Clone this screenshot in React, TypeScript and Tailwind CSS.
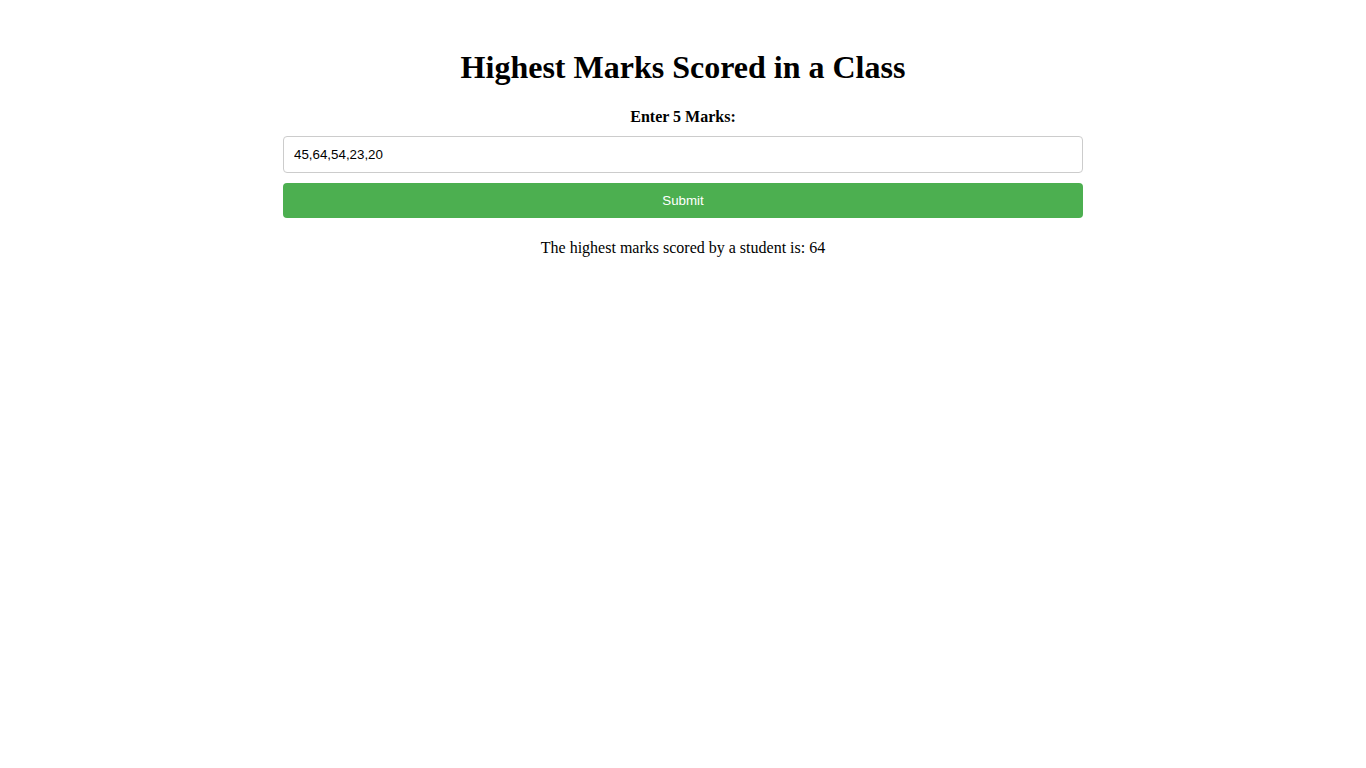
import { useState } from 'react'

export default function App() {
  const [marks, setMarks] = useState('45,64,54,23,20')
  const [result, setResult] = useState<number | null>(64)

  const handleSubmit = () => {
    const nums = marks
      .split(',')
      .map((m) => Number(m.trim()))
      .filter((n) => !Number.isNaN(n))
    setResult(nums.length ? Math.max(...nums) : null)
  }

  return (
    <div className="min-h-screen bg-white text-black font-['Liberation_Serif',serif]">
      <div className="mx-auto w-[800px] pt-[49px] text-center">
        <h1 className="text-[32px] font-bold leading-[37px]">Highest Marks Scored in a Class</h1>
        <label htmlFor="marks" className="mt-[22px] block text-base font-bold leading-[18px]">
          Enter 5 Marks:
        </label>
        <input
          id="marks"
          value={marks}
          onChange={(e) => setMarks(e.target.value)}
          className="mt-[10px] block h-[37px] w-full rounded border border-[#ccc] px-[10px] text-left text-[13.33px] text-black font-['Liberation_Sans',Arial,sans-serif] outline-none"
        />
        <button
          type="button"
          onClick={handleSubmit}
          className="mt-[10px] block h-[35px] w-full rounded bg-[#4CAF50] text-[13.33px] text-white font-['Liberation_Sans',Arial,sans-serif]"
        >
          Submit
        </button>
        {result !== null && (
          <p className="mt-[21px] text-base leading-[18px]">
            The highest marks scored by a student is: {result}
          </p>
        )}
      </div>
    </div>
  )
}
